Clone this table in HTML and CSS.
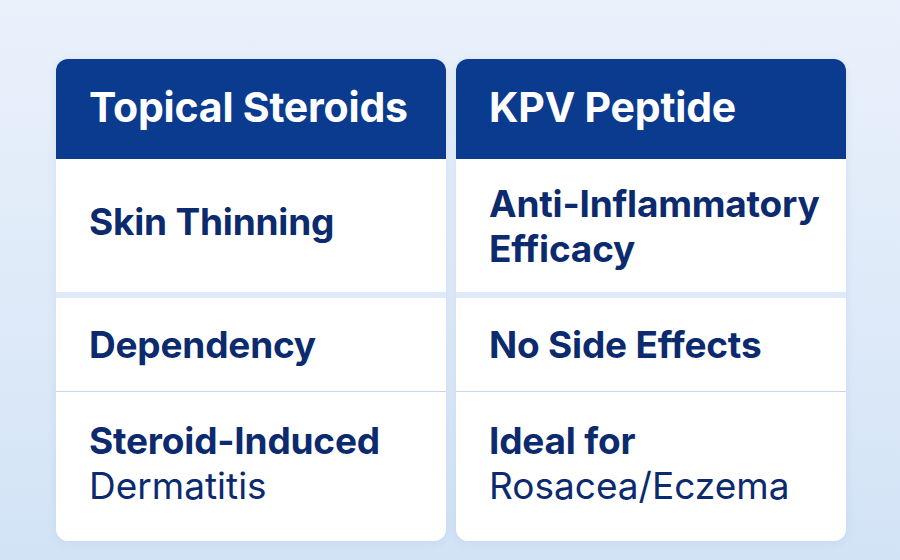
FILE: index.html
```html
<!DOCTYPE html>
<html>
<head>
<meta charset="utf-8">
<link rel="stylesheet" href="styles.css">
</head>
<body>
<main class="compare">
  <section class="card">
    <header class="card-head">Topical Steroids</header>
    <div class="cell cell-1"><p class="strong">Skin Thinning</p></div>
    <div class="cell cell-2"><p class="strong">Dependency</p></div>
    <div class="cell cell-3"><p><span class="strong">Steroid-Induced</span><br><span class="light">Dermatitis</span></p></div>
  </section>
  <section class="card">
    <header class="card-head">KPV Peptide</header>
    <div class="cell cell-1 two-line"><p class="strong">Anti-Inflammatory<br>Efficacy</p></div>
    <div class="cell cell-2"><p class="strong">No Side Effects</p></div>
    <div class="cell cell-3"><p><span class="strong">Ideal for</span><br><span class="light">Rosacea/Eczema</span></p></div>
  </section>
</main>
</body>
</html>
```
FILE: styles.css
```css
* { box-sizing: border-box; }
html, body { margin: 0; padding: 0; }
body {
  width: 900px;
  height: 560px;
  overflow: hidden;
  background: linear-gradient(180deg, #e9f1fb 0%, #dde9f8 60%, #d2e3f6 100%);
  font-family: Inter, "Noto Sans", sans-serif;
}
.compare {
  display: grid;
  grid-template-columns: 390px 390px;
  column-gap: 10px;
  padding: 59px 0 0 56px;
}
.card {
  display: flex;
  flex-direction: column;
  border-radius: 12px;
  overflow: hidden;
  box-shadow: 0 2px 10px rgba(40, 90, 160, 0.08);
}
.card-head {
  height: 100px;
  background: #0b3b8f;
  color: #ffffff;
  font-weight: 700;
  font-size: 41px;
  letter-spacing: -0.2px;
  display: flex;
  align-items: center;
  padding: 0 0 4px 33px;
}
.cell {
  background: #ffffff;
  display: flex;
  align-items: center;
  padding: 0 0 0 33px;
  color: #0c2a6e;
  font-size: 37px;
  letter-spacing: -0.2px;
  line-height: 45px;
}
.cell p { margin: 0; }
.strong { font-weight: 700; }
.light { font-weight: 400; letter-spacing: 0; }
.cell-1 { height: 133px; margin-bottom: 6px; padding-bottom: 8px; }
.cell-1.two-line { padding-bottom: 0; }
.cell-2 { height: 94px; border-bottom: 1px solid #c9d6e6; }
.cell-3 { height: 149px; padding-bottom: 8px; }
```
